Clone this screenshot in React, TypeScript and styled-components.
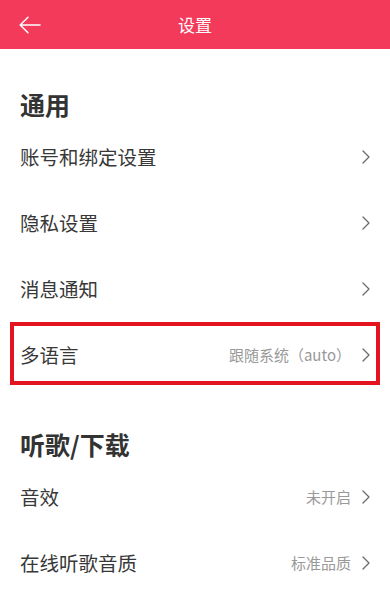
import React from "react";
import styled, { createGlobalStyle } from "styled-components";

const GlobalStyle = createGlobalStyle`
  html, body {
    margin: 0;
    padding: 0;
    background: #ffffff;
  }
  body {
    font-family: "Noto Sans CJK SC", "Noto Sans", "Liberation Sans", sans-serif;
  }
`;

type Item = { label: string; value?: string; highlight?: boolean };
type Section = { title: string; items: Item[] };

const sections: Section[] = [
  {
    title: "通用",
    items: [
      { label: "账号和绑定设置" },
      { label: "隐私设置" },
      { label: "消息通知" },
      { label: "多语言", value: "跟随系统（auto）", highlight: true },
    ],
  },
  {
    title: "听歌/下载",
    items: [
      { label: "音效", value: "未开启" },
      { label: "在线听歌音质", value: "标准品质" },
    ],
  },
];

const BackIcon = () => (
  <svg width="22" height="18" viewBox="0 0 22 18" fill="none">
    <path
      d="M21 9H1.5M9 1.2L1.2 9L9 16.8"
      stroke="#ffffff"
      strokeWidth="1.5"
      strokeLinecap="round"
      strokeLinejoin="round"
    />
  </svg>
);

const Chevron = () => (
  <svg width="8" height="14" viewBox="0 0 8 14" fill="none">
    <path
      d="M1 1L7 7L1 13"
      stroke="#6a6a6a"
      strokeWidth="1.3"
      strokeLinecap="round"
      strokeLinejoin="round"
    />
  </svg>
);

const App: React.FC = () => {
  return (
    <Page>
      <GlobalStyle />
      <TopBar>
        <BackButton>
          <BackIcon />
        </BackButton>
        <Title>设置</Title>
        <Spacer />
      </TopBar>
      {sections.map((section) => (
        <div key={section.title}>
          <SectionTitle>{section.title}</SectionTitle>
          {section.items.map((item) => (
            <Row key={item.label} $highlight={item.highlight}>
              <Label>{item.label}</Label>
              <RightSide>
                {item.value && <Value>{item.value}</Value>}
                <Chevron />
              </RightSide>
            </Row>
          ))}
        </div>
      ))}
    </Page>
  );
};

export default App;

const Page = styled.div`
  width: 390px;
  height: 597px;
  overflow: hidden;
  background: #ffffff;
`;

const TopBar = styled.div`
  height: 49px;
  background: #f33a5b;
  display: flex;
  align-items: center;
  padding: 0 10px 0 19px;
`;

const BackButton = styled.div`
  width: 40px;
  display: flex;
  align-items: center;
  padding-top: 1px;
`;

const Title = styled.div`
  flex: 1;
  text-align: center;
  color: #ffffff;
  font-size: 17px;
  padding-right: 9px;
`;

const Spacer = styled.div`
  width: 40px;
`;

const SectionTitle = styled.div`
  padding: 40px 20px 6px;
  height: 30px;
  line-height: 30px;
  font-size: 25px;
  font-weight: 700;
  color: #333333;
`;

const Row = styled.div<{ $highlight?: boolean }>`
  position: relative;
  box-sizing: border-box;
  height: 66px;
  display: flex;
  align-items: center;
  justify-content: space-between;
  padding: 0 20px 4px 20px;

  ${({ $highlight }) =>
    $highlight &&
    `
    &::after {
      content: "";
      position: absolute;
      left: 10px;
      right: 10px;
      top: -1px;
      bottom: 4px;
      border: 4px solid #e3141f;
      pointer-events: none;
    }
  `}
`;

const Label = styled.span`
  font-size: 19.5px;
  color: #383838;
`;

const RightSide = styled.div`
  display: flex;
  align-items: center;
  gap: 11px;
  padding-top: 1px;
`;

const Value = styled.span`
  font-size: 15px;
  color: #999999;
`;
